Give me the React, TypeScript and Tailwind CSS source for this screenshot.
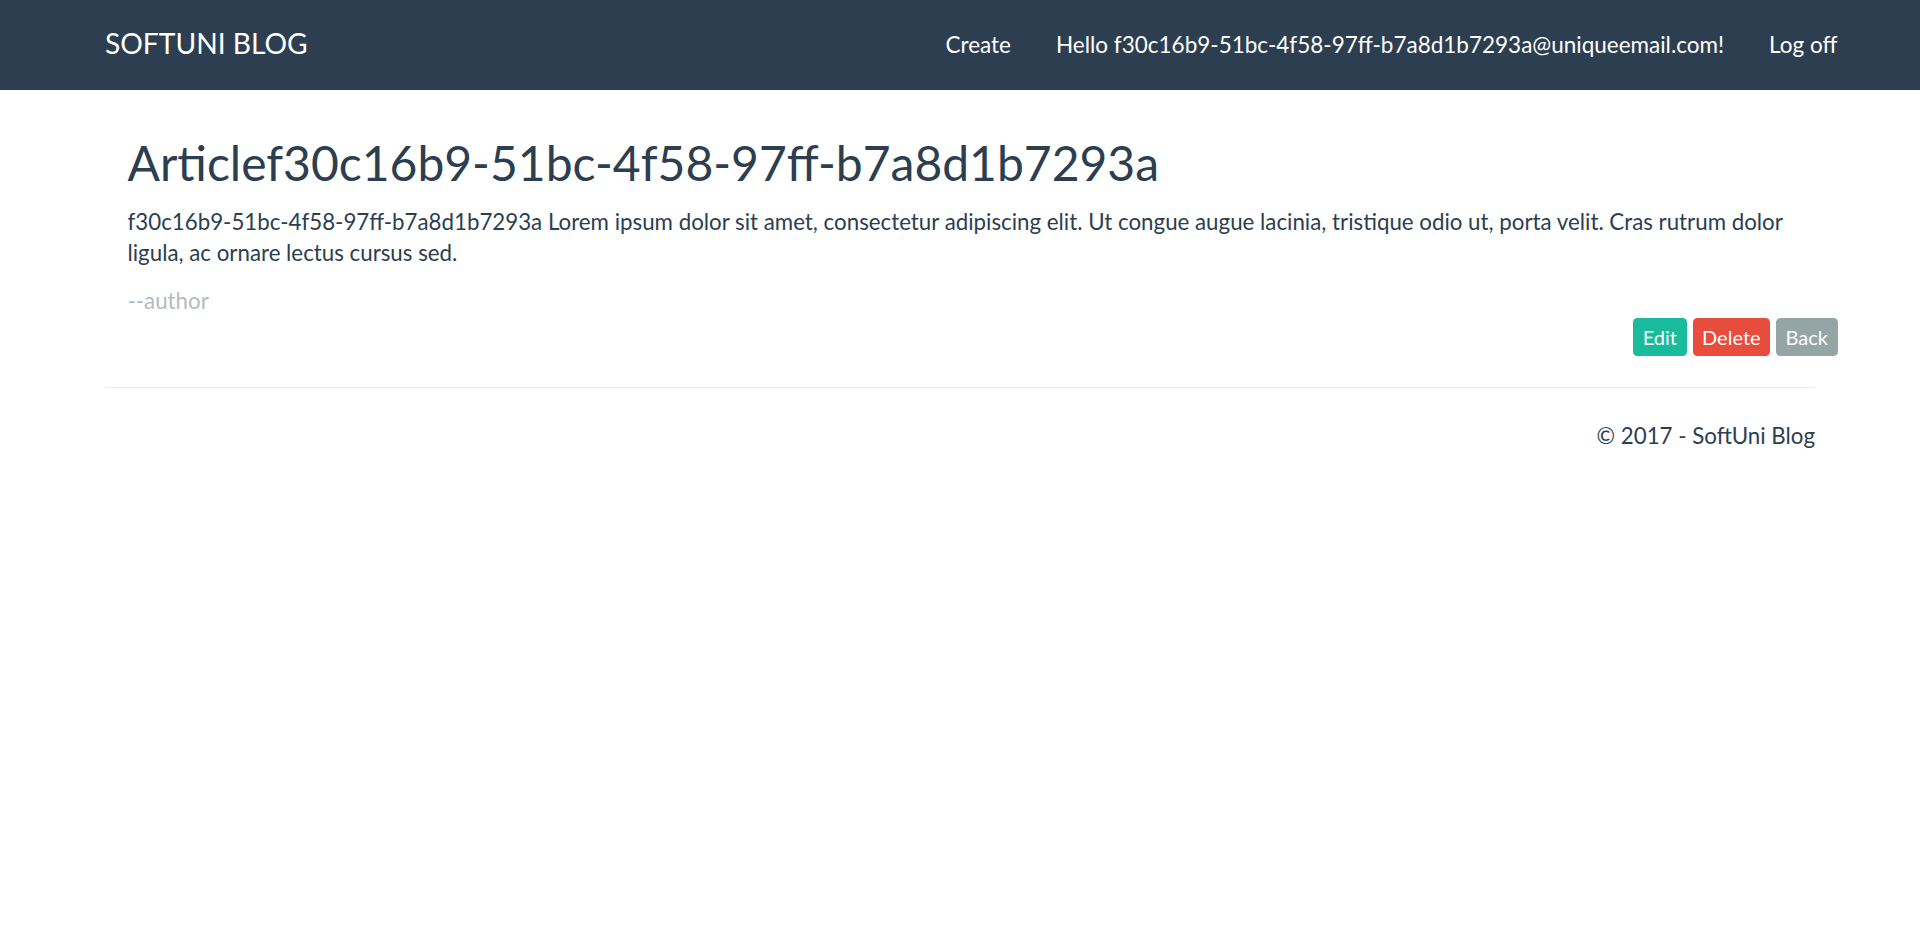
import React from "react";

export default function App() {
  return (
    <div
      className="min-h-[937px] bg-white text-[#2c3e50]"
      style={{ fontFamily: "Lato, 'Open Sans', 'Liberation Sans', sans-serif" }}
    >
      <nav className="h-[90px] bg-[#2c3e50] flex items-center justify-between pl-[105px] pr-[60px]">
        <a className="text-white text-[28.2px] leading-[31.5px] -mt-[3px] whitespace-nowrap">SOFTUNI BLOG</a>
        <ul className="flex items-center">
          <li>
            <a className="block px-[22.5px] text-white text-[22.5px] leading-[31.5px] whitespace-nowrap">Create</a>
          </li>
          <li>
            <a className="block px-[22.5px] text-white text-[22.5px] leading-[31.5px] whitespace-nowrap">
              Hello f30c16b9-51bc-4f58-97ff-b7a8d1b7293a@uniqueemail.com!
            </a>
          </li>
          <li>
            <a className="block px-[22.5px] text-white text-[22.5px] leading-[31.5px] whitespace-nowrap">Log off</a>
          </li>
        </ul>
      </nav>

      <main className="px-[105px]">
        <article className="pl-[22.5px] -mr-[22.5px]">
          <h2 className="mt-[47px] mb-[15.75px] text-[48px] leading-[52.8px] font-normal">
            Articlef30c16b9-51bc-4f58-97ff-b7a8d1b7293a
          </h2>
          <p className="text-[22.3px] leading-[31.5px] mb-[16.5px]">
            f30c16b9-51bc-4f58-97ff-b7a8d1b7293a Lorem ipsum dolor sit amet, consectetur adipiscing elit. Ut congue augue lacinia, tristique odio ut, porta velit. Cras rutrum dolor ligula, ac ornare lectus cursus sed.
          </p>
          <div className="text-[22.3px] leading-[31.5px] text-[#b4bcc2]">--author</div>
          <div className="flex justify-end gap-[6px] mt-[1px]">
            <a className="h-[38px] px-[9.5px] flex items-center rounded-[4.5px] bg-[#18bc9c] text-white text-[20px]">Edit</a>
            <a className="h-[38px] px-[9.5px] flex items-center rounded-[4.5px] bg-[#e74c3c] text-white text-[20px]">Delete</a>
            <a className="h-[38px] px-[9.5px] flex items-center rounded-[4.5px] bg-[#95a5a6] text-white text-[20px]">Back</a>
          </div>
        </article>
        <div className="mt-[31px] h-px bg-[#e7ebec]" />
        <footer className="mt-[32px] text-right text-[22.3px] leading-[31.5px]">
          <p>© 2017 - SoftUni Blog</p>
        </footer>
      </main>
    </div>
  );
}
